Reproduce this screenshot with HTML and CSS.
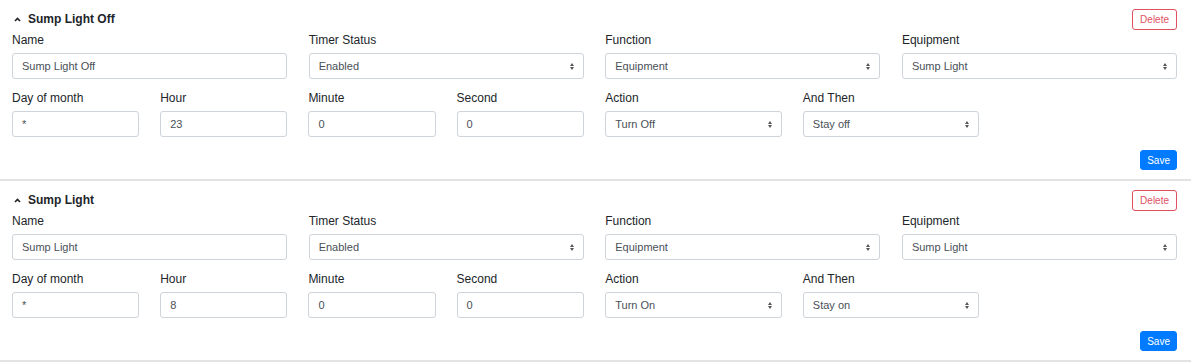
FILE: index.html
```html
<!DOCTYPE html>
<html>
	<head>
		<meta charset="utf-8">
		<title>Timers</title>
		<link rel="stylesheet" href="styles.css">
	</head>
	<body>
		<div class="timers">
			<div class="timer">
				<div class="head">
					<span class="caret"><svg width="7" height="5" viewBox="0 0 7 5"><path d="M1 4 L3.5 1.5 L6 4" fill="none" stroke="#212529" stroke-width="1.7"/></svg></span>
					<span class="title">Sump Light Off</span>
					<button class="btn-delete">Delete</button>
				</div>
				<div class="row top">
					<div class="field"><label>Name</label><div class="input">Sump Light Off</div></div>
					<div class="field"><label>Timer Status</label><div class="input select">Enabled<i class="arrows"></i></div></div>
					<div class="field"><label>Function</label><div class="input select">Equipment<i class="arrows"></i></div></div>
					<div class="field"><label>Equipment</label><div class="input select">Sump Light<i class="arrows"></i></div></div>
				</div>
				<div class="row bottom">
					<div class="half quarters">
						<div class="field"><label>Day of month</label><div class="input">*</div></div>
						<div class="field"><label>Hour</label><div class="input">23</div></div>
						<div class="field"><label>Minute</label><div class="input">0</div></div>
						<div class="field"><label>Second</label><div class="input">0</div></div>
					</div>
					<div class="half thirds">
						<div class="field"><label>Action</label><div class="input select">Turn Off<i class="arrows"></i></div></div>
						<div class="field"><label>And Then</label><div class="input select">Stay off<i class="arrows"></i></div></div>
					</div>
				</div>
				<div class="foot"><button class="btn-save">Save</button></div>
			</div>
			<div class="timer">
				<div class="head">
					<span class="caret"><svg width="7" height="5" viewBox="0 0 7 5"><path d="M1 4 L3.5 1.5 L6 4" fill="none" stroke="#212529" stroke-width="1.7"/></svg></span>
					<span class="title">Sump Light</span>
					<button class="btn-delete">Delete</button>
				</div>
				<div class="row top">
					<div class="field"><label>Name</label><div class="input">Sump Light</div></div>
					<div class="field"><label>Timer Status</label><div class="input select">Enabled<i class="arrows"></i></div></div>
					<div class="field"><label>Function</label><div class="input select">Equipment<i class="arrows"></i></div></div>
					<div class="field"><label>Equipment</label><div class="input select">Sump Light<i class="arrows"></i></div></div>
				</div>
				<div class="row bottom">
					<div class="half quarters">
						<div class="field"><label>Day of month</label><div class="input">*</div></div>
						<div class="field"><label>Hour</label><div class="input">8</div></div>
						<div class="field"><label>Minute</label><div class="input">0</div></div>
						<div class="field"><label>Second</label><div class="input">0</div></div>
					</div>
					<div class="half thirds">
						<div class="field"><label>Action</label><div class="input select">Turn On<i class="arrows"></i></div></div>
						<div class="field"><label>And Then</label><div class="input select">Stay on<i class="arrows"></i></div></div>
					</div>
				</div>
				<div class="foot"><button class="btn-save">Save</button></div>
			</div>
		</div>
	</body>
</html>
```

FILE: styles.css
```css
*{
	margin: 0;
	padding: 0;
	box-sizing: border-box;
}
body{
	background: #fff;
	font-family: "Liberation Sans", Arial, sans-serif;
	color: #212529;
}
.timers{
	width: 1191px;
}
.timer{
	padding: 8px 14px 0 12px;
	border-bottom: 2px solid #e2e3e5;
	height: 181px;
}
.head{
	display: flex;
	align-items: center;
	height: 22px;
}
.caret{
	display: flex;
	width: 16px;
	padding-left: 2px;
}
.title{
	font-size: 12px;
	font-weight: bold;
}
.btn-delete{
	margin-left: auto;
	height: 21px;
	padding: 0 7px;
	font: 10px "Liberation Sans", Arial, sans-serif;
	color: #e0515f;
	background: #fff;
	border: 1px solid #e0515f;
	border-radius: 3px;
}
.row{
	display: grid;
	column-gap: 21.5px;
}
.row.top{
	grid-template-columns: repeat(4, 1fr);
	margin-top: 1px;
}
.row.bottom{
	grid-template-columns: 1fr 1fr;
	margin-top: 10px;
}
.half{
	display: grid;
	column-gap: 21px;
}
.quarters{
	grid-template-columns: repeat(4, 1fr);
}
.thirds{
	grid-template-columns: repeat(3, 1fr);
}
.field label{
	display: block;
	font-size: 12px;
	line-height: 18px;
	margin-bottom: 4px;
}
.input{
	position: relative;
	height: 26px;
	border: 1px solid #ced4da;
	border-radius: 3px;
	padding-left: 9px;
	font-size: 11px;
	line-height: 24px;
	color: #495057;
	background: #fff;
}
.arrows{
	position: absolute;
	right: 9px;
	top: 9px;
	width: 4px;
	height: 7px;
}
.arrows:before,.arrows:after{
	content: "";
	position: absolute;
	left: 0;
	border-left: 2px solid transparent;
	border-right: 2px solid transparent;
}
.arrows:before{
	top: 0;
	border-bottom: 3px solid #555;
}
.arrows:after{
	bottom: 0;
	border-top: 3px solid #555;
}
.foot{
	display: flex;
	justify-content: flex-end;
	margin-top: 13px;
}
.btn-save{
	height: 20px;
	padding: 0 6px;
	font: 10px "Liberation Sans", Arial, sans-serif;
	color: #fff;
	background: #007bff;
	border: 1px solid #007bff;
	border-radius: 3px;
}
```
